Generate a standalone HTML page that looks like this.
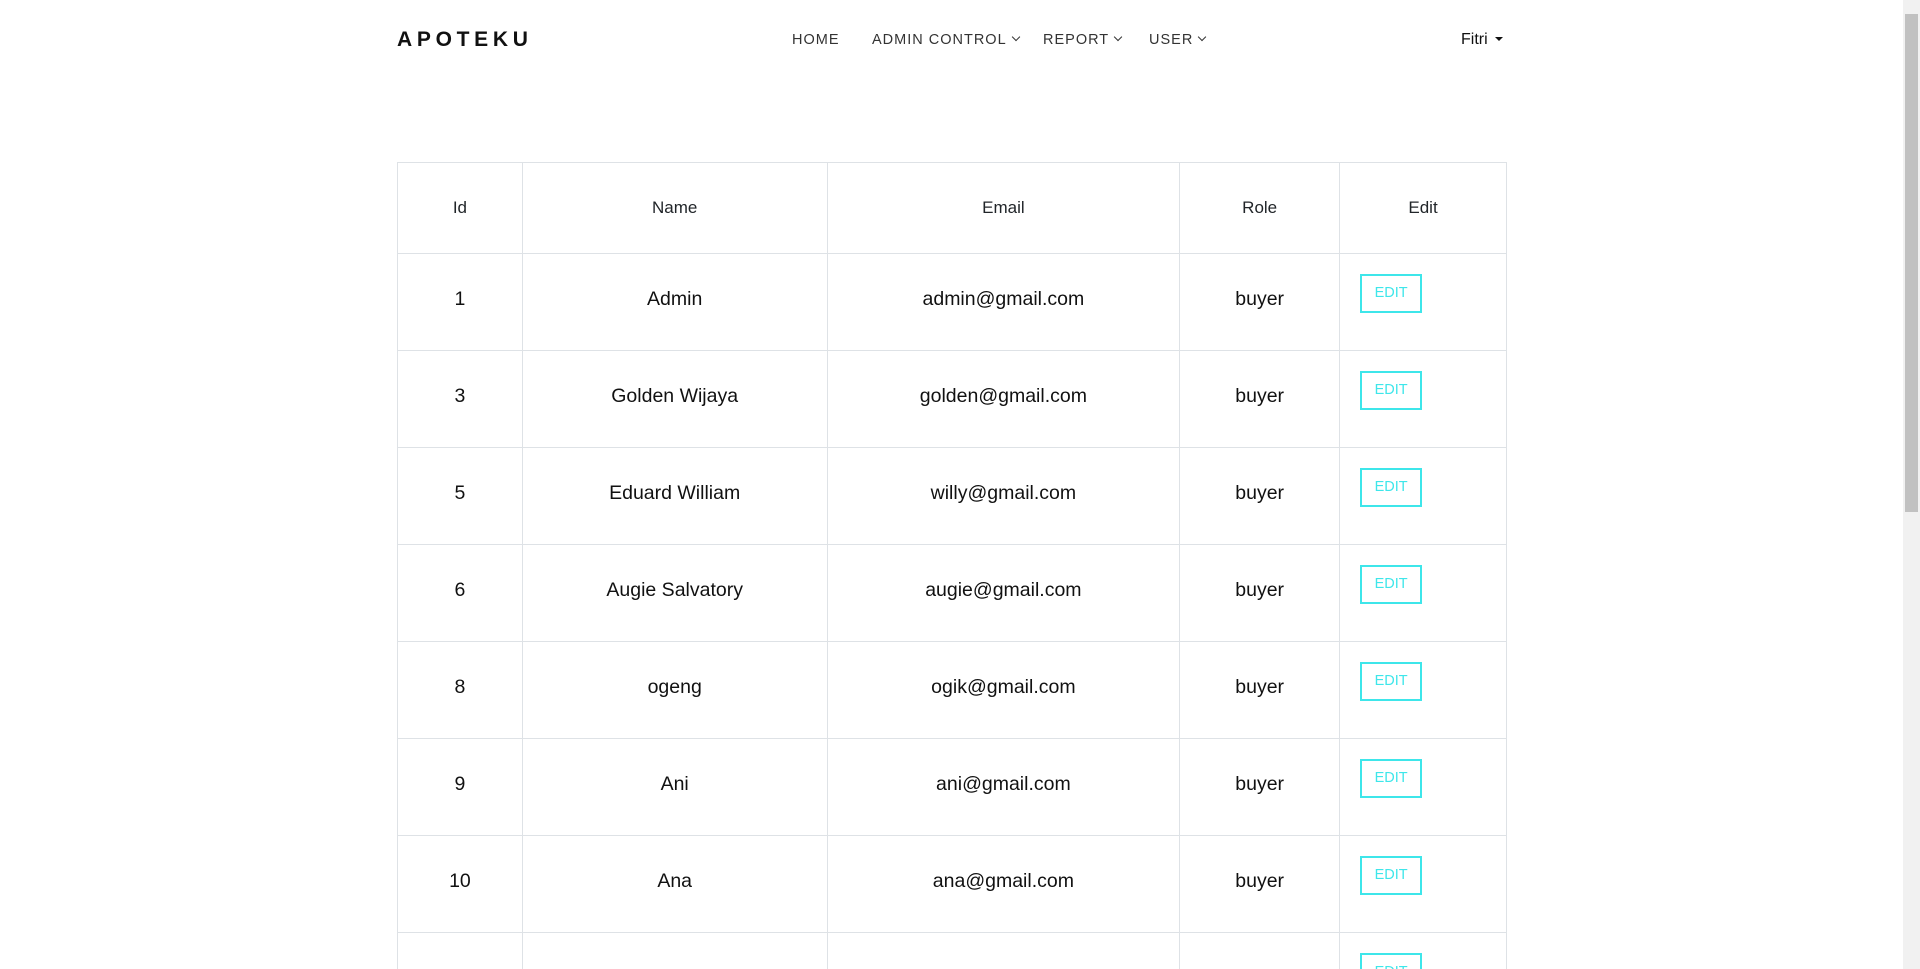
<!DOCTYPE html>
<html><head><style>
html,body{margin:0;padding:0;background:#fff;overflow:hidden}
body{width:1920px;height:969px;position:relative;font-family:"Liberation Sans",sans-serif;color:#212529}
.logo{position:absolute;left:397px;top:28px;font-size:21px;font-weight:bold;letter-spacing:4.7px;color:#111}
.nav{position:absolute;top:32px;font-size:14.5px;letter-spacing:1px;color:#333}
.car{display:inline-block;width:5px;height:5px;border-right:1.3px solid #333;border-bottom:1.3px solid #333;transform:rotate(45deg);margin-left:6px;position:relative;top:-4px}
.user{position:absolute;left:1461px;top:31px;font-size:16px;color:#111}
.user:after{content:"";display:inline-block;margin-left:7px;border-left:4px solid transparent;border-right:4px solid transparent;border-top:4px solid #111;vertical-align:3px}
.wrap{position:absolute;left:0;top:0;width:1920px;height:969px;overflow:hidden}
table{position:absolute;left:397px;top:162px;border-collapse:collapse;width:1110px}
td,th{border:1.5px solid #dee2e6;text-align:center;padding:0}
th{height:90px;font-weight:normal;font-size:17px}
td{height:91px;padding-bottom:5px;font-size:19.5px;color:#111}
td .b{display:inline-block;width:58px;height:35px;border:2px solid #3ee6ea;color:#3ee6ea;font-size:14.5px;line-height:35px;text-align:center;margin-top:-12px;vertical-align:middle}
td.e{text-align:left;padding-left:20px}
.sb{position:absolute;right:0;top:0;width:17px;height:969px;background:#f1f1f1}
.th{position:absolute;left:2px;width:13px;top:14px;height:498px;background:#c1c1c1}
</style></head><body>
<div class="wrap">
<div class="logo">APOTEKU</div>
<div class="nav" style="left:792px">HOME</div>
<div class="nav" style="left:872px">ADMIN CONTROL<span class="car"></span></div>
<div class="nav" style="left:1043px">REPORT<span class="car"></span></div>
<div class="nav" style="left:1149px">USER<span class="car"></span></div>
<div class="user">Fitri</div>
<table>
<colgroup><col style="width:125px"><col style="width:305px"><col style="width:353px"><col style="width:160px"><col style="width:167px"></colgroup>
<tr><th>Id</th><th>Name</th><th>Email</th><th>Role</th><th>Edit</th></tr>
<tr><td>1</td><td>Admin</td><td>admin@gmail.com</td><td>buyer</td><td class="e"><span class="b">EDIT</span></td></tr>
<tr><td>3</td><td>Golden Wijaya</td><td>golden@gmail.com</td><td>buyer</td><td class="e"><span class="b">EDIT</span></td></tr>
<tr><td>5</td><td>Eduard William</td><td>willy@gmail.com</td><td>buyer</td><td class="e"><span class="b">EDIT</span></td></tr>
<tr><td>6</td><td>Augie Salvatory</td><td>augie@gmail.com</td><td>buyer</td><td class="e"><span class="b">EDIT</span></td></tr>
<tr><td>8</td><td>ogeng</td><td>ogik@gmail.com</td><td>buyer</td><td class="e"><span class="b">EDIT</span></td></tr>
<tr><td>9</td><td>Ani</td><td>ani@gmail.com</td><td>buyer</td><td class="e"><span class="b">EDIT</span></td></tr>
<tr><td>10</td><td>Ana</td><td>ana@gmail.com</td><td>buyer</td><td class="e"><span class="b">EDIT</span></td></tr>
<tr><td></td><td></td><td></td><td></td><td class="e"><span class="b">EDIT</span></td></tr>
</table>
<div class="sb"><div class="th"></div></div>
</div>
</body></html>
